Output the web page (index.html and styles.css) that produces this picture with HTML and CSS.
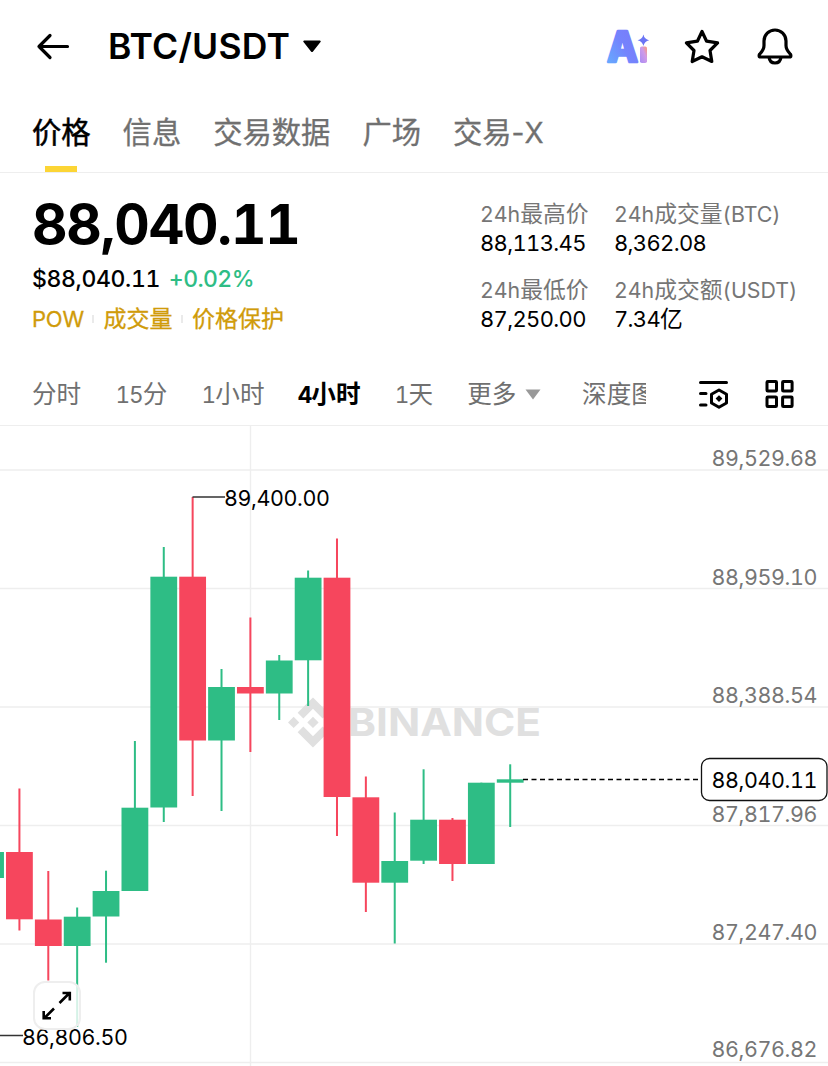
FILE: index.html
```html
<!DOCTYPE html>
<html lang="zh-CN">
<head>
  <meta charset="UTF-8">
  <title>BTC/USDT</title>
  <link rel="stylesheet" href="styles.css">
</head>
<body>

  <header class="header">
    <svg class="back" width="34" height="28" viewBox="0 0 34 28">
      <path d="M31.500 13.500H3M14 2.500L3 13.500L14 24.500" />
    </svg>
    <h1 class="pair">BTC/USDT</h1>
    <svg class="pair-arrow" width="20" height="14" viewBox="0 0 20 14">
      <path d="M2 .5H18Q19.4 1 18.500 2L11 11.500Q10 12.500 9 11.500L1.500 2Q.6 1 2 .5Z" />
    </svg>
    <div class="header-icons">
      <svg class="ai" width="44" height="38" viewBox="0 0 44 38">
        <defs>
          <linearGradient id="aiA" x1="0" y1="1" x2="1" y2="0">
            <stop offset="0" stop-color="#62b4ff" />
            <stop offset="0.5" stop-color="#7484fd" />
            <stop offset="1" stop-color="#7b78f8" />
          </linearGradient>
          <linearGradient id="aiI" x1="0" y1="1" x2="1" y2="0">
            <stop offset="0" stop-color="#a98cf5" />
            <stop offset="0.6" stop-color="#cf9be8" />
            <stop offset="1" stop-color="#ff9a70" />
          </linearGradient>
        </defs>
        <text class="ai-letter" x="3" y="34" textLength="31" lengthAdjust="spacingAndGlyphs">A</text>
        <rect x="36" y="18.500" width="7" height="16.500" rx="1.800" fill="url(#aiI)" />
        <path d="M39.400 6.500Q40.400 11.300 45.200 12.300Q40.400 13.300 39.400 18.100Q38.400 13.300 33.600 12.300Q38.400 11.300 39.400 6.500Z" fill="#6b75f5" />
      </svg>
      <svg class="line-icon" width="38" height="38" viewBox="0 0 38 38">
        <path d="M19 3.500L23.600 13.200L34.600 14.900L27 22.500L28.800 33.500L19 28.800L9.200 33.500L11 22.500L3.400 14.900L14.400 13.200Z" />
      </svg>
      <svg class="line-icon" width="38" height="38" viewBox="0 0 38 38">
        <path d="M4.500 29C2.600 29 3 27 3.700 26.100C6.500 23 8 21.500 8 17.500V13C8 6.500 13 2 19 2S30 6.500 30 13V17.500C30 21.500 31.500 23 34.300 26.100C35 27 35.400 29 33.500 29Z" />
        <path d="M13 29C13.500 33.500 16 35 19 35S24.500 33.500 25 29" />
      </svg>
    </div>
  </header>

  <nav class="tabs">
    <a class="tab active">价格</a>
    <a class="tab">信息</a>
    <a class="tab">交易数据</a>
    <a class="tab">广场</a>
    <a class="tab">交易<span class="latin">-X</span></a>
  </nav>

  <section class="summary">
    <div class="quote">
      <div class="price">88,040.11</div>
      <div class="fiat">$88,040.11 <span class="up">+0.02%</span></div>
      <div class="tags">
        <span class="tag tag-pow">POW</span>
        <span class="tag">成交量</span>
        <span class="tag">价格保护</span>
      </div>
    </div>
    <dl class="stats">
      <div class="stat">
        <dt><span class="latin">24h</span>最高价</dt>
        <dd>88,113.45</dd>
      </div>
      <div class="stat">
        <dt><span class="latin">24h</span>成交量<span class="latin">(BTC)</span></dt>
        <dd>8,362.08</dd>
      </div>
      <div class="stat">
        <dt><span class="latin">24h</span>最低价</dt>
        <dd>87,250.00</dd>
      </div>
      <div class="stat">
        <dt><span class="latin">24h</span>成交额<span class="latin">(USDT)</span></dt>
        <dd>7.34<span class="unit">亿</span></dd>
      </div>
    </dl>
  </section>

  <nav class="intervals">
    <div class="interval-list">
      <a>分时</a>
      <a><span class="latin">15</span>分</a>
      <a><span class="latin">1</span>小时</a>
      <a class="active"><span class="latin">4</span>小时</a>
      <a><span class="latin">1</span>天</a>
      <a class="more">更多<svg width="16" height="11" viewBox="0 0 16 11"><path d="M.5 .5H15.500L8 10.500Z" /></svg></a>
      <a>深度图</a>
    </div>
    <svg class="tool" width="32" height="32" viewBox="0 0 32 32">
      <path d="M3.500 4.500H29.500M3.500 15.500H9M3.500 27H9" />
      <path d="M22 12L29.500 16.200V25L22 29.300L14.500 25V16.200Z" />
      <path class="solid" d="M22 17.200L25.400 20.600L22 24L18.600 20.600Z" />
    </svg>
    <svg class="tool" width="32" height="32" viewBox="0 0 32 32">
      <rect x="3" y="3.500" width="9.500" height="9.500" rx="0.800" />
      <rect x="18.600" y="3.500" width="9.500" height="9.500" rx="0.800" />
      <rect x="3" y="19" width="9.500" height="9.500" rx="0.800" />
      <rect x="18.600" y="19" width="9.500" height="9.500" rx="0.800" />
    </svg>
  </nav>

  <main class="chart">
    <svg width="828" height="640" viewBox="0 426 828 640">
      <path class="grid" d="M0 470H828M0 588.500H828M0 707H828M0 825.500H828M0 944H828M0 1062.500H828M250.500 426V1066" />
      <g class="watermark">
        <path transform="translate(288 697.500) scale(2.083)" d="M16.624 13.920l2.718 2.715-7.353 7.353-7.353-7.352 2.718-2.716 4.635 4.660zM21.261 9.284L24 12l-2.715 2.716L18.568 12zM11.989 9.285l2.716 2.691-2.716 2.717L9.272 12zM2.716 9.284L5.409 12l-2.692 2.692L0 12zM11.989.012l7.353 7.329-2.718 2.715-4.635-4.636-4.636 4.660-2.717-2.715z" />
        <text x="348" y="736" textLength="193" lengthAdjust="spacingAndGlyphs">BINANCE</text>
      </g>
      <g id="candles"></g>
      <path class="last-line" d="M523 779.500H702" />
      <path class="marker" d="M192.500 497H225M0 1035.500H23" />
      <g class="axis">
        <text x="711.500" y="466" textLength="106">89,529.68</text>
        <text x="711.500" y="585" textLength="106">88,959.10</text>
        <text x="711.500" y="703" textLength="106">88,388.54</text>
        <text x="711.500" y="822" textLength="106">87,817.96</text>
        <text x="711.500" y="940" textLength="106">87,247.40</text>
        <text x="711.500" y="1057" textLength="106">86,676.82</text>
      </g>
      <rect class="last-box" x="701.500" y="758.500" width="125.500" height="42" rx="8" />
      <g class="labels">
        <text x="711.500" y="788" textLength="106">88,040.11</text>
        <text x="224" y="505.500" textLength="106">89,400.00</text>
        <text x="22" y="1044.500" textLength="106">86,806.50</text>
      </g>
    </svg>
    <button class="expand">
      <svg width="32" height="32" viewBox="0 0 32 32">
        <path d="M18.500 13L29 2.500M21.500 3H28.800V10.500M13 18.500L3 28.500M2.700 21V28.200H10" />
      </svg>
    </button>
  </main>

  <script src="script.js"></script>
</body>
</html>
```

FILE: styles.css
```css
* {
  box-sizing: border-box;
}

body {
  margin: 0;
  width: 828px;
  height: 1066px;
  overflow: hidden;
  background: #fff;
  color: #000;
  font-family: Inter, "Noto Sans CJK SC", sans-serif;
}

/* header */
.header {
  display: flex;
  align-items: center;
  height: 93px;
  padding: 0 34px 0 36px;
}

.back {
  fill: none;
  stroke: #000;
  stroke-width: 3.2;
  stroke-linecap: round;
  stroke-linejoin: round;
}

.pair {
  margin: 0 0 0 38px;
  line-height: 48px;
  font-size: 35.5px;
  font-weight: 600;
  letter-spacing: 0.2px;
}

.pair-arrow {
  margin-left: 12px;
}

.header-icons {
  display: flex;
  align-items: center;
  gap: 35px;
  margin-left: auto;
}

.ai {
  overflow: visible;
}

.ai-letter {
  font-size: 42px;
  font-weight: 800;
  fill: url(#aiA);
  stroke: url(#aiA);
  stroke-width: 2.5;
  stroke-linejoin: round;
}

.line-icon {
  fill: none;
  stroke: #000;
  stroke-width: 3.2;
  stroke-linejoin: round;
}

/* page tabs */
.tabs {
  display: flex;
  gap: 32px;
  height: 80px;
  padding: 0 32px;
  border-bottom: 1px solid #eee;
}

.tab {
  position: relative;
  height: 79px;
  line-height: 79px;
  font-size: 29.3px;
  color: #707070;
  -webkit-text-stroke: 0.3px;
}

.tab .latin {
  font-size: 28px;
}

.tab.active {
  color: #000;
  -webkit-text-stroke: 0.5px;
}

.tab.active::after {
  content: "";
  position: absolute;
  left: 13px;
  bottom: 0;
  width: 32px;
  height: 6px;
  background: #fcd535;
}

/* price summary */
.summary {
  display: flex;
  height: 190px;
  padding: 26px 0 0 32px;
  font-feature-settings: "tnum";
}

.quote {
  width: 448px;
}

.price {
  height: 50px;
  line-height: 50px;
  font-size: 55px;
  font-weight: 700;
  letter-spacing: -1.2px;
}

.fiat {
  height: 40px;
  margin-top: 10px;
  line-height: 40px;
  font-size: 23px;
  font-weight: 500;
  letter-spacing: -0.35px;
}

.up {
  margin-left: 3px;
  letter-spacing: -0.6px;
  color: #2ebd85;
}

.tags {
  display: flex;
  height: 40px;
  line-height: 40px;
  font-size: 23px;
  color: #d09b0a;
  -webkit-text-stroke: 0.3px;
}

.tag {
  display: flex;
  align-items: center;
}

.tag-pow {
  font-size: 22px;
  letter-spacing: -0.2px;
}

.tag + .tag::before {
  content: "";
  width: 2px;
  height: 8px;
  margin: 0 9px 0 8.5px;
  background: #eaeaea;
}

.stats {
  display: grid;
  grid-template-columns: 134px 1fr;
  grid-template-rows: 60px 60px;
  row-gap: 16px;
  margin: 0;
}

.stat dt,
.stat dd {
  height: 30px;
  margin: 0;
  line-height: 29px;
  font-size: 22.8px;
  white-space: nowrap;
}

.stat dt {
  color: #767676;
}

.stat .latin {
  font-size: 21.3px;
}

.stat dd {
  font-size: 22px;
  letter-spacing: -0.65px;
}

.stat .unit {
  font-size: 22.8px;
  line-height: 0;
}

/* chart intervals */
.intervals {
  display: flex;
  align-items: center;
  height: 63px;
  padding-left: 32px;
  border-bottom: 1px solid #eee;
}

.interval-list {
  display: flex;
  gap: 34.2px;
  width: 614px;
  overflow: hidden;
  line-height: 40px;
  font-size: 24.6px;
  white-space: nowrap;
  color: #707070;
}

.interval-list a {
  flex: none;
}

.interval-list .active {
  margin-left: -1px;
  color: #000;
  font-weight: 700;
}

.interval-list .latin {
  font-size: 22.5px;
  font-feature-settings: "tnum";
  letter-spacing: -0.9px;
}

.more svg {
  margin: 0 6.5px 3px 9px;
  vertical-align: baseline;
  fill: #999;
}

.tool {
  margin-left: 51px;
  fill: none;
  stroke: #000;
  stroke-width: 3;
  stroke-linecap: round;
  stroke-linejoin: round;
}

.tool + .tool {
  margin-left: 35px;
}

.tool .solid {
  fill: #000;
  stroke: none;
}

/* candlestick chart */
.chart {
  position: relative;
  height: 640px;
  font-feature-settings: "tnum";
}

.chart > svg {
  display: block;
}

.grid {
  stroke: #eee;
  stroke-width: 1.4;
}

.watermark {
  fill: #e0e0e0;
}

.watermark text {
  font-size: 38.5px;
  font-weight: 700;
}

.candle-up {
  fill: #2ebd85;
}

.candle-down {
  fill: #f6465d;
}

.last-line {
  stroke: #000;
  stroke-width: 1.3;
  stroke-dasharray: 5 3.5;
}

.marker {
  stroke: #333;
  stroke-width: 1.5;
}

.axis text,
.labels text {
  font-size: 21.5px;
}

.axis {
  fill: #767676;
}

.last-box {
  fill: #fff;
  stroke: #111;
  stroke-width: 1.3;
}

.expand {
  position: absolute;
  left: 33px;
  top: 555px;
  display: flex;
  align-items: center;
  justify-content: center;
  width: 48px;
  height: 49px;
  padding: 0;
  border: 2px solid #eee;
  border-radius: 12px;
  background: rgba(255, 255, 255, 0.8);
}

.expand svg {
  fill: none;
  stroke: #000;
  stroke-width: 2.6;
}
```

FILE: script.js
```js
// [direction, body top, body bottom, wick top, wick bottom]
const candles = [
  ["up", 852, 878, 852, 878],
  ["down", 852, 919.3, 788.5, 930.5],
  ["down", 919.5, 946, 871, 980.5],
  ["up", 916.7, 946, 907.5, 1027],
  ["up", 891, 916.5, 870.7, 962.7],
  ["up", 807.7, 891, 741, 891],
  ["up", 576.7, 807.5, 547, 822],
  ["down", 576.7, 740.5, 497, 796],
  ["up", 687, 740.5, 669, 811],
  ["down", 687, 693.5, 617.5, 752],
  ["up", 660.5, 693.5, 655, 720],
  ["up", 577.7, 660.3, 570.5, 706],
  ["down", 577.7, 797, 538.5, 836],
  ["down", 797.3, 882.7, 776.5, 912],
  ["up", 861, 882.7, 812.5, 943.5],
  ["up", 819.7, 860.7, 769.3, 864],
  ["down", 819.7, 864, 818, 881],
  ["up", 782.7, 864, 782.7, 864],
  ["up", 779.3, 782.7, 764.3, 827]
];

const step = 28.87;
const firstX = -9.45;
const group = document.getElementById("candles");

function addRect(dir, x, top, width, bottom) {
  const rect = document.createElementNS("http://www.w3.org/2000/svg", "rect");
  rect.setAttribute("class", "candle-" + dir);
  rect.setAttribute("x", x);
  rect.setAttribute("y", top);
  rect.setAttribute("width", width);
  rect.setAttribute("height", bottom - top);
  group.appendChild(rect);
}

candles.forEach(function (c, i) {
  const center = firstX + i * step;
  addRect(c[0], center - 1, c[3], 2, c[4]);
  addRect(c[0], center - 13.4, c[1], 26.8, c[2]);
});
```
